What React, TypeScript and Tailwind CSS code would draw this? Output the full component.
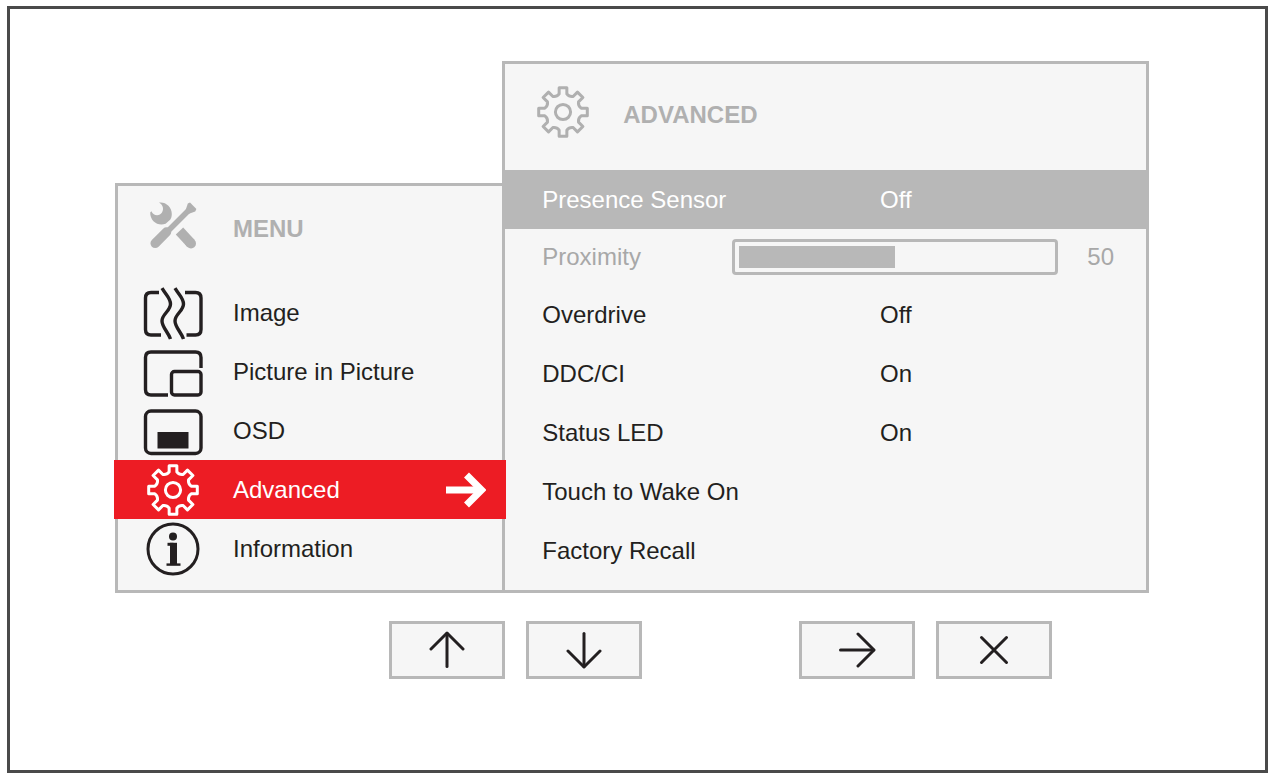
import { useState } from "react";
import type { ReactNode } from "react";
import clsx from "clsx";

type IconProps = { className?: string };

// Eight-toothed cog outline centred on 0,0
const gearPath = (() => {
  const at = (radius: number, deg: number) => {
    const rad = (deg * Math.PI) / 180;
    return `${(radius * Math.sin(rad)).toFixed(2)} ${(-radius * Math.cos(rad)).toFixed(2)}`;
  };
  const teeth = Array.from({ length: 8 }, (_, i) => {
    const a = i * 45;
    return `${at(18.5, a - 12)} L${at(24.6, a - 9)} L${at(24.6, a + 9)} L${at(18.5, a + 12)} Q${at(16.2, a + 22.5)}`;
  });
  return `M${teeth.join(" ")} ${at(18.5, -12)} Z`;
})();

function GearIcon({ className }: IconProps) {
  return (
    <svg viewBox="-30 -27 60 54" className={clsx("w-[60px] h-[54px] shrink-0", className)} fill="none" stroke="currentColor" strokeWidth="3" strokeLinejoin="round" aria-hidden="true">
      <path d={gearPath} />
      <circle r="7.6" />
    </svg>
  );
}

function ToolsIcon({ className }: IconProps) {
  return (
    <svg viewBox="0 3 60 54" className={clsx("w-[60px] h-[54px] shrink-0", className)} fill="none" stroke="currentColor" aria-hidden="true">
      <path d="M16 6.6 C22 5.4 29 10.5 28.8 18 C28.7 20.6 28.3 22 27.4 23.4 L22.6 27.8 C15 30.8 7 25 7.2 16.5 L8.4 15.2 C10.5 20.5 17 20 19 16.5 C21 13 20 9 16 6.6 Z" fill="currentColor" stroke="none" />
      <path d="M36.5 35 L48 47.5" strokeWidth="10" />
      <path d="M47 46.5 L48 47.5" strokeWidth="10" strokeLinecap="round" />
      <path d="M12.2 47.3 L23.5 36" strokeWidth="9.5" strokeLinecap="round" />
      <path d="M24 36 L46 14" strokeWidth="5.4" />
      <path d="M42.5 14.5 L44.8 7.5 L47 6.6 L53.4 13 L52.2 15.5 L46 17.8 Z" fill="currentColor" stroke="none" />
    </svg>
  );
}

function ImageIcon() {
  return (
    <svg viewBox="0 0 60 54" className="w-[60px] h-[54px] shrink-0" fill="none" stroke="currentColor" strokeWidth="3.4" aria-hidden="true">
      <path d="M16 6.5 H8 Q2.5 6.5 2.5 12 V43.5 Q2.5 49 8 49 H18" />
      <path d="M42 6.5 H52.5 Q58 6.5 58 12 V43.5 Q58 49 52.5 49 H43.5" />
      <path d="M19 2.2 C23 9 27.5 12 27.5 18 C27.5 25 19 28 19 35 C19 41 25 46 27.5 53" />
      <path d="M32 2.2 C36 9 40.5 12 40.5 18 C40.5 25 32 28 32 35 C32 41 38 46 40.5 53" />
    </svg>
  );
}

function PipIcon() {
  return (
    <svg viewBox="0 0 60 54" className="w-[60px] h-[54px] shrink-0" fill="none" stroke="currentColor" strokeWidth="3.4" aria-hidden="true">
      <path d="M25 50 H8 Q2.5 50 2.5 44.5 V12.5 Q2.5 7 8 7 H52.5 Q58 7 58 12.5 V23" />
      <rect x="28.5" y="26.5" width="29.5" height="23.5" rx="3" />
    </svg>
  );
}

function OsdIcon() {
  return (
    <svg viewBox="0 0 60 54" className="w-[60px] h-[54px] shrink-0" fill="none" stroke="currentColor" strokeWidth="3.4" aria-hidden="true">
      <rect x="2.5" y="7" width="55.5" height="42.5" rx="5.5" />
      <path d="M14.5 28 H45.5 V44.5 H14.5 Z" fill="currentColor" stroke="none" />
    </svg>
  );
}

function InfoIcon() {
  return (
    <svg viewBox="0 0 60 54" className="w-[60px] h-[54px] shrink-0" fill="none" stroke="currentColor" strokeWidth="3" aria-hidden="true">
      <circle cx="30" cy="27" r="25" />
      <circle cx="30" cy="14.5" r="4" fill="currentColor" stroke="none" />
      <path d="M24.5 22.3 H30.5" />
      <path d="M30.5 20.8 V43" strokeWidth="7" />
      <path d="M23.5 42.6 H37.5" strokeWidth="2.4" />
    </svg>
  );
}

function ArrowIcon({ className }: IconProps) {
  return (
    <svg viewBox="0 0 38 38" className={clsx("w-[38px] h-[38px]", className)} fill="none" stroke="currentColor" strokeWidth="3" strokeLinecap="round" aria-hidden="true">
      <path d="M2.5 19 H35.5" />
      <path d="M20 3 L36 19 L20 35" strokeLinejoin="round" />
    </svg>
  );
}

function CloseIcon() {
  return (
    <svg viewBox="0 0 38 38" className="w-[38px] h-[38px]" fill="none" stroke="currentColor" strokeWidth="3" strokeLinecap="round" aria-hidden="true">
      <path d="M6.5 6.5 L31.5 31.5 M31.5 6.5 L6.5 31.5" />
    </svg>
  );
}

const menu: { name: string; icon: ReactNode }[] = [
  { name: "Image", icon: <ImageIcon /> },
  { name: "Picture in Picture", icon: <PipIcon /> },
  { name: "OSD", icon: <OsdIcon /> },
  { name: "Advanced", icon: <GearIcon /> },
  { name: "Information", icon: <InfoIcon /> },
];

const settings = [
  { name: "Overdrive", value: "Off" },
  { name: "DDC/CI", value: "On" },
  { name: "Status LED", value: "On" },
  { name: "Touch to Wake On", value: "" },
  { name: "Factory Recall", value: "" },
];

function SettingRow({ name, value, highlighted }: { name: string; value: string; highlighted?: boolean }) {
  return (
    <button type="button" className={clsx("grid w-full h-[59px] grid-cols-[338fr_266fr] items-center pl-[37px] text-left", highlighted && "bg-[#b8b8b8] text-white")}>
      <span>{name}</span>
      <span>{value}</span>
    </button>
  );
}

function KeyButton({ label, children }: { label: string; children: ReactNode }) {
  return (
    <button type="button" aria-label={label} className="flex h-[58px] w-[116px] items-center justify-center border-[3px] border-[#b8b8b8] bg-[#f6f6f6]">
      {children}
    </button>
  );
}

export default function App() {
  const [active, setActive] = useState("Advanced");
  const [proximity, setProximity] = useState(50);

  return (
    <div className="flex min-h-screen bg-white pt-1.5 pl-[7px] pr-0.5 font-['Liberation_Sans',Arial,sans-serif] text-2xl text-[#231f20]">
      <main className="flex-1 border-[3px] border-[#4a4a4a] pt-[52px] pl-[105px] pr-[116px]">
        <div className="flex items-end">
          <nav aria-label="Menu" className="min-w-0 flex-[388] border-[3px] border-r-0 border-[#b8b8b8] bg-[#f6f6f6] pb-3">
            <h2 className="flex h-[97px] items-center gap-[30px] pb-3 pl-[25px] text-[#b0b0b0] font-bold">
              <ToolsIcon className="mb-1.5" />
              <span>MENU</span>
            </h2>
            {menu.map(({ name, icon }) => (
              <button
                key={name}
                type="button"
                onClick={() => setActive(name)}
                className={clsx("flex h-[59px] items-center gap-[30px]", active === name ? "relative -mx-1 w-[calc(100%+8px)] bg-[#ed1c24] pl-[29px] pr-5 text-white" : "w-full pl-[25px]")}
              >
                {icon}
                <span>{name}</span>
                {active === name && (
                  <svg viewBox="0 0 40 36" className="ml-auto h-9 w-10" fill="none" stroke="currentColor" strokeWidth="7" aria-hidden="true">
                    <path d="M0 18 H34" />
                    <path d="M20.5 3 L35.5 18 L20.5 33" />
                  </svg>
                )}
              </button>
            ))}
          </nav>

          <section className="min-w-0 flex-[647] border-[3px] border-[#b8b8b8] bg-[#f6f6f6] pb-2.5">
            <h2 className="flex h-[106px] items-center gap-[30px] pl-7 pb-1 text-[#b0b0b0] font-bold">
              <GearIcon className="mb-1.5" />
              <span>ADVANCED</span>
            </h2>
            <SettingRow name="Presence Sensor" value="Off" highlighted />
            <div className="flex h-14 items-center pl-[37px] pr-8 text-[#a8a8a8]">
              <label htmlFor="proximity" className="w-[190px]">Proximity</label>
              <input
                id="proximity"
                type="range"
                value={proximity}
                onChange={(e) => setProximity(Number(e.target.value))}
                style={{ backgroundSize: `${proximity}% 100%` }}
                className="h-9 min-w-0 flex-1 appearance-none rounded-sm border-[3px] border-[#b8b8b8] bg-linear-to-r from-[#b8b8b8] to-[#b8b8b8] bg-origin-content bg-no-repeat p-1 [&::-webkit-slider-thumb]:opacity-0"
              />
              <output htmlFor="proximity" className="w-14 text-right">{proximity}</output>
            </div>
            {settings.map((s) => (
              <SettingRow key={s.name} {...s} />
            ))}
          </section>
        </div>

        <div className="mt-7 flex justify-end gap-[157px] pr-[97px]">
          <div className="flex gap-[21px]">
            <KeyButton label="Up"><ArrowIcon className="-rotate-90" /></KeyButton>
            <KeyButton label="Down"><ArrowIcon className="rotate-90" /></KeyButton>
          </div>
          <div className="flex gap-[21px]">
            <KeyButton label="Right"><ArrowIcon /></KeyButton>
            <KeyButton label="Close"><CloseIcon /></KeyButton>
          </div>
        </div>
      </main>
    </div>
  );
}
